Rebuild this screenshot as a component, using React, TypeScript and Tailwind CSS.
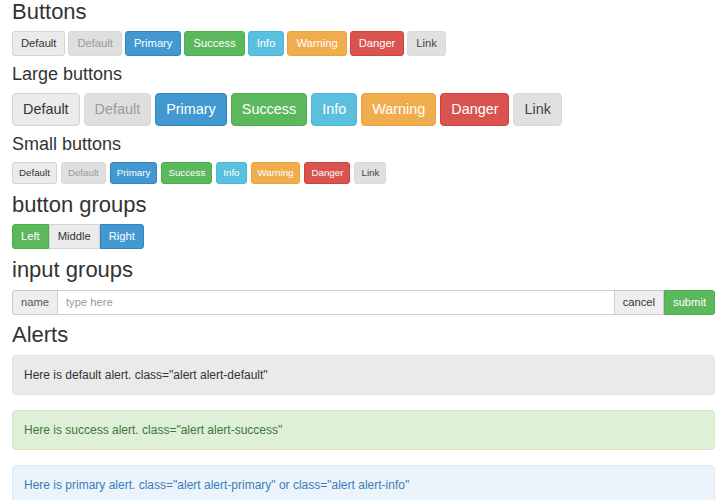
import React from "react";

type V = "default" | "disabled" | "primary" | "success" | "info" | "warning" | "danger" | "link";

const variantCls: Record<V, string> = {
  default: "bg-[#ebebeb] border-[#d3d3d3] text-[#333]",
  disabled: "bg-[#dfdfdf] border-[#d9d9d9] text-[#9b9b9b]",
  primary: "bg-[#4299d1] border-[#3584bb] text-white",
  success: "bg-[#5cb85c] border-[#4cae4c] text-white",
  info: "bg-[#5bc0de] border-[#46b8da] text-white",
  warning: "bg-[#f0ad4e] border-[#eea236] text-white",
  danger: "bg-[#d9534f] border-[#d43f3a] text-white",
  link: "bg-[#e0e0e0] border-[#dadada] text-[#444]",
};

const items: { v: V; t: string }[] = [
  { v: "default", t: "Default" },
  { v: "disabled", t: "Default" },
  { v: "primary", t: "Primary" },
  { v: "success", t: "Success" },
  { v: "info", t: "Info" },
  { v: "warning", t: "Warning" },
  { v: "danger", t: "Danger" },
  { v: "link", t: "Link" },
];

const sizeCls = {
  md: "text-[11.2px] leading-[15px] py-[4px] px-2 rounded-[3px]",
  lg: "text-[14.4px] leading-[19px] py-[6px] px-[10px] rounded-[4px]",
  sm: "text-[9.75px] leading-[14px] py-[3px] px-[6px] rounded-[3px]",
};

function Row({ size, gap }: { size: "md" | "lg" | "sm"; gap: string }) {
  return (
    <div className={`flex ${gap}`}>
      {items.map((it, i) => (
        <div key={i} className={`border whitespace-nowrap ${sizeCls[size]} ${variantCls[it.v]}`}>
          {it.t}
        </div>
      ))}
    </div>
  );
}

export default function App() {
  return (
    <div
      className="bg-white text-[#333] pl-3 pr-[5px] w-[720px] h-[500px] overflow-hidden"
      style={{ fontFamily: '"Liberation Sans", Arial, sans-serif' }}
    >
      <div className="text-[22px] leading-[24px]">Buttons</div>
      <div className="mt-[7px]">
        <Row size="md" gap="gap-[3px]" />
      </div>
      <div className="text-[18px] leading-[20px] mt-[8px]">Large buttons</div>
      <div className="mt-[9px]">
        <Row size="lg" gap="gap-[4px]" />
      </div>
      <div className="text-[18px] leading-[20px] mt-[8px]">Small buttons</div>
      <div className="mt-[8px]">
        <Row size="sm" gap="gap-[4px]" />
      </div>
      <div className="text-[22px] leading-[24px] mt-[9px]">button groups</div>
      <div className="mt-[7px] flex">
        <div className="text-[11.2px] leading-[15px] py-[4px] px-2 border rounded-l-[3px] bg-[#5cb85c] border-[#4cae4c] text-white">
          Left
        </div>
        <div className="text-[11.2px] leading-[15px] py-[4px] px-2 border bg-[#ebebeb] border-[#d3d3d3] text-[#333]">
          Middle
        </div>
        <div className="text-[11.2px] leading-[15px] py-[4px] px-2 border rounded-r-[3px] bg-[#4299d1] border-[#3584bb] text-white">
          Right
        </div>
      </div>
      <div className="text-[22px] leading-[24px] mt-[9px]">input groups</div>
      <div className="mt-[8px] flex h-[25px] text-[11.2px]">
        <div className="flex items-center px-2 border border-[#ccc] rounded-l-[3px] bg-[#eee] text-[#555]">
          name
        </div>
        <div className="flex-1 flex items-center pl-[8px] border-y border-[#ccc] bg-white text-[#999]">
          type here
        </div>
        <div className="flex items-center px-2 border border-[#ccc] bg-[#eee] text-[#333]">
          cancel
        </div>
        <div className="flex items-center px-2 border border-[#4cae4c] rounded-r-[3px] bg-[#5cb85c] text-white">
          submit
        </div>
      </div>
      <div className="text-[22px] leading-[24px] mt-[8px]">Alerts</div>
      <div className="mt-[8px] flex flex-col gap-[15px] text-[12px]">
        <div className="h-[40px] flex items-center pl-[11px] border border-[#e0e0e0] rounded-[4px] bg-[#eaeaea] text-[#333]">
          Here is default alert. class="alert alert-default"
        </div>
        <div className="h-[40px] flex items-center pl-[11px] border border-[#d6e9c6] rounded-[4px] bg-[#dff0d8] text-[#3c763d]">
          Here is success alert. class="alert alert-success"
        </div>
        <div className="h-[40px] flex items-center pl-[11px] border border-[#dbe8f5] rounded-[4px] bg-[#ecf4fb] text-[#3a7cb8]">
          Here is primary alert. class="alert alert-primary" or class="alert alert-info"
        </div>
      </div>
    </div>
  );
}
